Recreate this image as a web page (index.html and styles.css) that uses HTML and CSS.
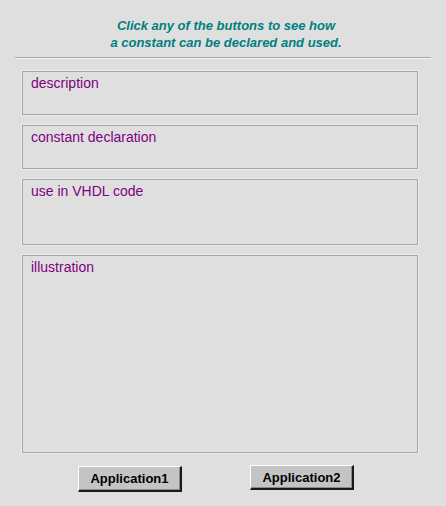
FILE: index.html
```html
<!DOCTYPE html>
<html>
<head>
<meta charset="utf-8">
<link rel="stylesheet" href="styles.css">
</head>
<body>
<div class="page">
  <div class="title">Click any of the buttons to see how<br>a constant can be declared and used.</div>
  <div class="rule"></div>
  <div class="panels">
    <div class="panel h1">description</div>
    <div class="panel h1">constant declaration</div>
    <div class="panel h2">use in VHDL code</div>
    <div class="panel h3">illustration</div>
  </div>
  <div class="buttons">
    <button class="btn">Application1</button>
    <button class="btn">Application2</button>
  </div>
</div>
</body>
</html>
```
FILE: styles.css
```css
html, body {
  margin: 0;
  padding: 0;
  background: #dfdfdf;
}
.page {
  width: 446px;
  height: 506px;
  font-family: "Liberation Sans", Arial, sans-serif;
}
.title {
  padding-top: 17px;
  padding-left: 6px;
  text-align: center;
  color: #008080;
  font-weight: bold;
  font-style: italic;
  font-size: 13px;
  line-height: 17px;
}
.rule {
  margin: 6px 15px 0 15px;
  height: 1px;
  background: #a8a8a8;
  border-bottom: 1px solid #f4f4f4;
}
.panels {
  display: flex;
  flex-direction: column;
  gap: 8px;
  margin: 11px 0 0 21px;
  width: 398px;
}
.panel {
  box-sizing: border-box;
  border: 1px solid #a4a4a4;
  box-shadow: 0 0 0 1px #ececec;
  margin: 1px;
  width: 396px;
  padding: 3px 0 0 8px;
  color: #800080;
  font-size: 14px;
  line-height: 17px;
}
.h1 { height: 44px; }
.h2 { height: 66px; }
.h3 { height: 198px; }
.buttons {
  display: flex;
  gap: 68px;
  margin: 12px 0 0 78px;
  align-items: flex-start;
}
.btn {
  box-sizing: border-box;
  width: 104px;
  height: 26px;
  padding: 0;
  background: #c4c4c4;
  border-style: solid;
  border-width: 1px 2px 2px 1px;
  border-color: #ffffff #1a1a1a #1a1a1a #ffffff;
  box-shadow: inset -1px -1px 0 #8a8a8a;
  font-family: "Liberation Sans", Arial, sans-serif;
  font-weight: bold;
  font-size: 13px;
  color: #000;
}
.btn + .btn { margin-top: -1px; height: 25px; }
```
